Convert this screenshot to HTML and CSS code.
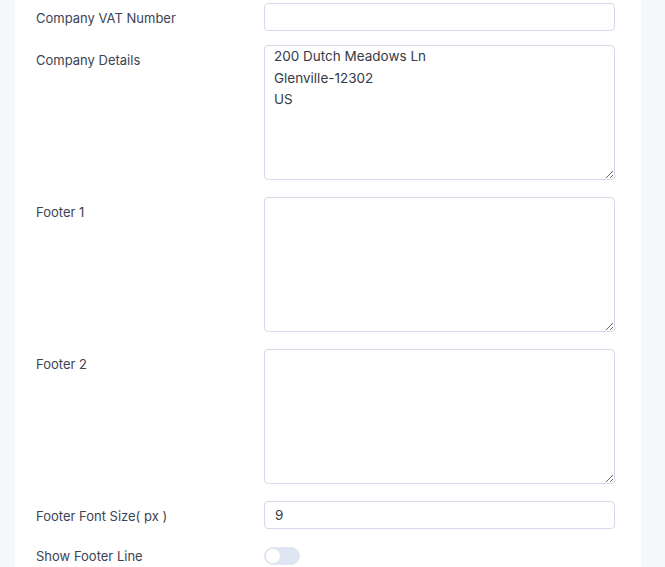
FILE: index.html
```html
<!DOCTYPE html>
<html>
<head>
<meta charset="utf-8">
<link rel="stylesheet" href="styles.css">
</head>
<body>
<div class="card">
  <div class="row">
    <label class="label">Company VAT Number</label>
    <input class="input" type="text" value="">
  </div>
  <div class="row">
    <label class="label">Company Details</label>
    <textarea class="textarea">200 Dutch Meadows Ln
Glenville-12302
US</textarea>
  </div>
  <div class="row">
    <label class="label">Footer 1</label>
    <textarea class="textarea"></textarea>
  </div>
  <div class="row">
    <label class="label">Footer 2</label>
    <textarea class="textarea"></textarea>
  </div>
  <div class="row">
    <label class="label">Footer Font Size( px )</label>
    <input class="input" type="text" value="9">
  </div>
  <div class="row row-switch">
    <label class="label">Show Footer Line</label>
    <span class="toggle"><span class="knob"></span></span>
  </div>
</div>
</body>
</html>
```
FILE: styles.css
```css
html, body {
  margin: 0;
  padding: 0;
  background: #f5f7fb;
  height: 100%;
}
body {
  font-family: "Inter", "Noto Sans", sans-serif;
  overflow: hidden;
}
.card {
  margin: 0 24px 0 15px;
  background: #ffffff;
  padding: 3px 25px 0 21px;
  min-height: 567px;
  box-sizing: border-box;
}
.row {
  display: flex;
  align-items: flex-start;
  margin-bottom: 17px;
}
.row:first-child {
  margin-bottom: 14px;
}
.label {
  width: 228px;
  flex: none;
  padding-top: 7px;
  font-size: 13px;
  line-height: 16px;
  color: #3c4353;
}
.row-switch {
  align-items: center;
}
.row-switch .label {
  padding-top: 0;
}
.input, .textarea {
  flex: none;
  width: 351px;
  box-sizing: border-box;
  border: 1px solid #d3dbe8;
  border-radius: 4px;
  background: #fff;
  font-family: "Inter", "Noto Sans", sans-serif;
  font-size: 13.5px;
  color: #363b48;
  outline: none;
  margin: 0;
}
.input {
  height: 28px;
  padding: 0 10px;
}
.textarea {
  height: 135px;
  padding: 0 9px;
  line-height: 21.5px;
  resize: vertical;
}
.toggle {
  margin-top: 1px;
  width: 36px;
  height: 18px;
  border-radius: 9px;
  background: #dfe6f2;
  position: relative;
  display: block;
}
.knob {
  position: absolute;
  left: 2px;
  top: 2px;
  width: 14px;
  height: 14px;
  border-radius: 50%;
  background: #fff;
}
```
